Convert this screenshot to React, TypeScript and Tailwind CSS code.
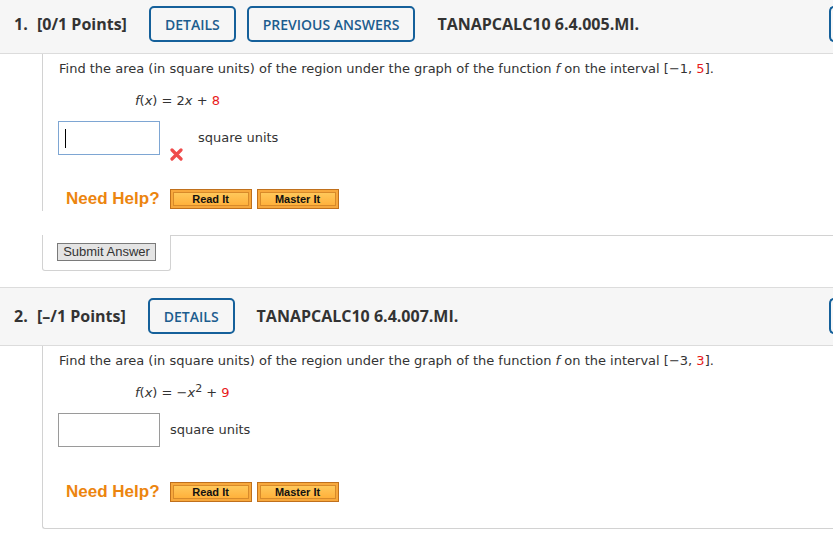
import React from 'react';

const headFont = { fontFamily: '"Open Sans", "Liberation Sans", sans-serif' };
const bodyFont = { fontFamily: '"DejaVu Sans", Verdana, sans-serif' };
const arial = { fontFamily: '"Liberation Sans", Arial, sans-serif' };

const OutlineButton: React.FC<{ label: string }> = ({ label }) => (
  <div
    className="h-[36px] px-[14px] flex items-center border-2 border-[#15609a] rounded-[5px] text-[14px] font-semibold text-[#1c5d8e] bg-[#f6f6f6]"
    style={headFont}
  >
    {label}
  </div>
);

const HelpButton: React.FC<{ label: string }> = ({ label }) => (
  <div className="w-[82px] h-[20px] border border-[#c0701c] bg-[#f7a83c] p-[2px]">
    <div
      className="h-full border border-[#d88a2a] bg-gradient-to-b from-[#ffc85a] to-[#ffb13b] flex items-center justify-center text-[11px] font-bold text-[#111]"
      style={arial}
    >
      {label}
    </div>
  </div>
);

const NeedHelp: React.FC = () => (
  <div className="flex items-center pl-[23px] h-[24px]">
    <span className="text-[17px] font-bold text-[#ec850f] mr-[10px]" style={arial}>
      Need Help?
    </span>
    <div className="flex gap-[5px]">
      <HelpButton label="Read It" />
      <HelpButton label="Master It" />
    </div>
  </div>
);

const Header: React.FC<{ num: string; points: string; buttons: string[]; code: string; top: string }> = ({
  num,
  points,
  buttons,
  code,
  top,
}) => (
  <div className={`bg-[#f6f6f6] border-b border-[#dcdcdc] pb-[11px] ${top}`}>
    <div className="flex items-center text-[#333] font-bold text-[16px]" style={headFont}>
      <span className="pl-[14px] w-[37px]">{num}</span>
      <span>{points}</span>
      <div className="flex gap-[11px] ml-[22px]">
        {buttons.map((b) => (
          <OutlineButton key={b} label={b} />
        ))}
      </div>
      <span className="ml-[22px]">{code}</span>
      <div className="ml-auto w-[10px] h-[36px] border-2 border-r-0 border-[#15609a] rounded-l-[5px] mr-[-6px]" />
    </div>
  </div>
);

const Question: React.FC<{ a: string; b: string; func: React.ReactNode; wrong?: boolean }> = ({ a, b, func, wrong }) => (
  <div className="pt-[6px] pl-[15px] text-[13px] text-[#333]" style={bodyFont}>
    <div className="pl-[1px] leading-[18px]">
      Find the area (in square units) of the region under the graph of the function <i>f</i> on the interval [−{a},{' '}
      <span className="text-[#e8191a]">{b}</span>].
    </div>
    <div className="pl-[77px] mt-[14px] leading-[18px]">{func}</div>
    {wrong ? (
      <div className="flex items-center mt-[11px]">
        <div className="w-[102px] h-[34px] border border-[#7ea6d3] bg-white flex items-center pl-[6px]">
          <span className="w-[1px] h-[19px] bg-black" />
        </div>
        <svg className="ml-[10px] self-end mb-[-6px]" width="13" height="13" viewBox="0 0 13 13">
          <path d="M2 2 L11 11 M11 2 L2 11" stroke="#ef4b4b" strokeWidth="3.2" strokeLinecap="round" />
        </svg>
        <span className="ml-[15px]">square units</span>
      </div>
    ) : (
      <div className="flex items-center mt-[11px]">
        <div className="w-[102px] h-[34px] border border-[#9a9a9a] bg-white" />
        <span className="ml-[10px]">square units</span>
      </div>
    )}
  </div>
);

export default function App() {
  return (
    <div className="w-[833px] h-[535px] bg-white overflow-hidden">
      <Header num="1." points="[0/1 Points]" buttons={['DETAILS', 'PREVIOUS ANSWERS']} code="TANAPCALC10 6.4.005.MI." top="pt-[6px]" />
      <div className="ml-[42px] border-l border-[#d2d2d2]">
        <Question
          a="1"
          b="5"
          wrong
          func={
            <>
              <i>f</i>(<i>x</i>) = 2<i>x</i> + <span className="text-[#e8191a]">8</span>
            </>
          }
        />
        <div className="mt-[32px] mb-[24px]">
          <NeedHelp />
        </div>
      </div>
      <div className="ml-[42px] flex">
        <div className="w-[129px] h-[36px] border-l border-r border-b border-[#d2d2d2] rounded-b-[3px] pt-[8px] pl-[14px]">
          <div
            className="w-[99px] h-[18px] bg-[#e4e4e4] border border-[#7a7a7a] text-[13px] text-[#333] flex items-center justify-center"
            style={arial}
          >
            Submit Answer
          </div>
        </div>
        <div className="flex-1 border-t border-[#d2d2d2]" />
      </div>
      <div className="h-[16px]" />
      <div className="border-t border-[#dcdcdc]">
        <Header num="2." points="[–/1 Points]" buttons={['DETAILS']} code="TANAPCALC10 6.4.007.MI." top="pt-[10px]" />
      </div>
      <div className="ml-[42px] border-l border-b border-[#d2d2d2] rounded-bl-[3px]">
        <Question
          a="3"
          b="3"
          func={
            <>
              <i>f</i>(<i>x</i>) = −<i>x</i>
              <sup className="text-[11px]">2</sup> + <span className="text-[#e8191a]">9</span>
            </>
          }
        />
        <div className="mt-[33px] pb-[24px]">
          <NeedHelp />
        </div>
      </div>
    </div>
  );
}
